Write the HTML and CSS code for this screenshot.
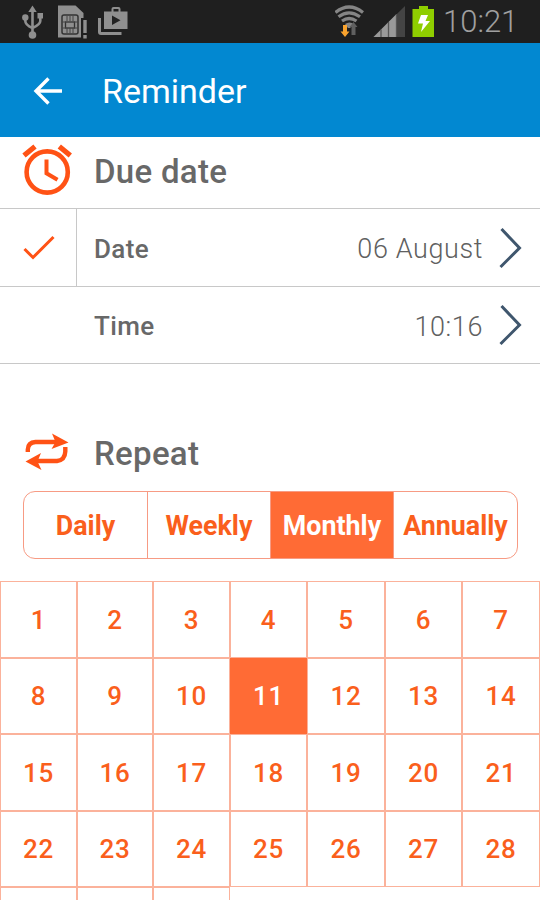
FILE: index.html
```
<!DOCTYPE html>
<html lang="en">
<head>
    <meta charset="utf-8">
    <title>Reminder</title>
    <link rel="stylesheet" href="styles.css">
</head>
<body>
    <div class="status-bar">
        <svg class="status-icons" width="130" height="42" viewBox="0 0 130 42" fill="#8f8f8f">
            <!-- usb -->
            <path d="M32.500 5.500l4.200 6.500h-8.400z"/>
            <circle cx="32.500" cy="35" r="3.800"/>
            <circle cx="25.300" cy="17.500" r="3.200"/>
            <rect x="37.500" y="13" width="5.500" height="5.500"/>
            <path d="M32.500 11v22M25.300 18v3q0 4 7.200 7M40.300 17v4q0 3.500-7.800 7" fill="none" stroke="#8f8f8f" stroke-width="2.600"/>
            <!-- sim card -->
            <path d="M58 5.500h17.500l8 7.500v5h-2.500v19.500H58z"/>
            <rect x="62" y="15" width="16" height="19" rx="2" fill="none" stroke="#333" stroke-width="1.500"/>
            <rect x="65.500" y="22" width="9" height="6" fill="none" stroke="#333" stroke-width="1.300"/>
            <path d="M67 16v5M70 16v5M73 16v5M67 28v5M70 28v5M73 28v5M62 22h4M74 22h4M62 28h4M74 28h4" stroke="#444"/>
            <path d="M83.300 20h3.400v13h-3.400zM83.300 35h3.400v3.500h-3.400z"/>
            <!-- store bag -->
            <path d="M104 11.500h7.500V9q0-2 2-2h5q2 0 2 2v2.500h7V29H104zM113.500 11.500h5V9h-5z" fill-rule="evenodd"/>
            <path d="M112 15.500l8.500 4.800-8.500 4.700z" fill="#222"/>
            <path d="M98 18h3v14h20.500v3H101q-3 0-3-3z"/>
        </svg>
        <svg class="status-icons" width="105" height="42" viewBox="335 0 105 42">
            <!-- wifi with traffic arrows -->
            <g fill="none" stroke="#858585" stroke-width="3.200">
                <path d="M335.500 12.500q13.500-11 27.500 0M338.500 16.800q10.500-8 21.500 0M342 21q7-5 14.500 0"/>
            </g>
            <path d="M345 24q4.500-3 9 0L350 28h-2z" fill="#858585"/>
            <path d="M353.500 22l4 5h-2v8h-4v-8h-2z" fill="#606060"/>
            <path d="M343 25h4v6.500h2.500L345 37l-4.500-5.500h2.500z" fill="#f9a32e"/>
            <!-- signal -->
            <path d="M373.500 37L405 6v31z" fill="#444"/>
            <path d="M373.500 37L396 14.500V37z" fill="#999"/>
            <path d="M381 29.500v7.500M388.500 22v15M396.500 14v23" stroke="#555" stroke-width="1.300"/>
            <!-- battery -->
            <path d="M419 6h9v3h6v28h-21.500V9h6.500z" fill="#8fce00"/>
            <path d="M421 15h7l-2.500 6H430l-9 11 2-8.500h-5z" fill="#fff"/>
        </svg>
        <span class="clock">10:21</span>
    </div>

    <div class="app-bar">
        <svg width="30" height="28" viewBox="0 0 30 28" fill="none" stroke="#fff" stroke-width="3.400">
            <path d="M15.500 1.500L3 14l12.500 12.500M3 14h26"/>
        </svg>
        <h1>Reminder</h1>
    </div>

    <div class="section-title due">
        <svg width="50" height="52" viewBox="0 0 50 52" fill="none" stroke="#ff5215">
            <circle cx="25.200" cy="28" r="20.600" stroke-width="4.600"/>
            <path d="M24.500 15.500v13.800L35.500 35.700" stroke-width="4"/>
            <path d="M2 11.500L13 2.500M37.300 2.500l11 9" stroke-width="5.200"/>
        </svg>
        <h2>Due date</h2>
    </div>

    <div class="row">
        <div class="check">
            <svg width="32" height="26" viewBox="0 0 32 26" fill="none" stroke="#ff5215" stroke-width="3">
                <path d="M1.500 14L10 22.500 30.500 2"/>
            </svg>
        </div>
        <span class="label">Date</span>
        <span class="value">06 August</span>
        <svg class="chevron" width="24" height="42" viewBox="0 0 24 42" fill="none" stroke="#3f566d" stroke-width="3">
            <path d="M2.500 2l18 19L1.500 40"/>
        </svg>
    </div>
    <div class="row">
        <div class="check empty"></div>
        <span class="label">Time</span>
        <span class="value">10:16</span>
        <svg class="chevron" width="24" height="42" viewBox="0 0 24 42" fill="none" stroke="#3f566d" stroke-width="3">
            <path d="M2.500 2l18 19L1.500 40"/>
        </svg>
    </div>

    <div class="section-title repeat">
        <svg width="50" height="38" viewBox="0 0 50 38" fill="#ff5215">
            <path d="M5.800 19v-2.500Q6 9.500 13.500 9H36M43.300 14v4.500Q43 27 35 28H13" fill="none" stroke="#ff5215" stroke-width="4.400"/>
            <path d="M30 .5L46.500 9.500 29.500 16l4-7zM19 20L3.500 28.500 19.500 37l-4-8.500z"/>
        </svg>
        <h2>Repeat</h2>
    </div>

    <div class="tabs">
        <div class="tab">Daily</div>
        <div class="tab">Weekly</div>
        <div class="tab active">Monthly</div>
        <div class="tab">Annually</div>
    </div>

    <div class="days">
        <div class="day">1</div>
        <div class="day">2</div>
        <div class="day">3</div>
        <div class="day">4</div>
        <div class="day">5</div>
        <div class="day">6</div>
        <div class="day">7</div>
        <div class="day">8</div>
        <div class="day">9</div>
        <div class="day">10</div>
        <div class="day active">11</div>
        <div class="day">12</div>
        <div class="day">13</div>
        <div class="day">14</div>
        <div class="day">15</div>
        <div class="day">16</div>
        <div class="day">17</div>
        <div class="day">18</div>
        <div class="day">19</div>
        <div class="day">20</div>
        <div class="day">21</div>
        <div class="day">22</div>
        <div class="day">23</div>
        <div class="day">24</div>
        <div class="day">25</div>
        <div class="day">26</div>
        <div class="day">27</div>
        <div class="day">28</div>
        <div class="day cut"></div>
        <div class="day cut"></div>
        <div class="day cut"></div>
    </div>
</body>
</html>
```
FILE: styles.css
```
* {
    box-sizing: border-box;
}

body {
    margin: 0;
    height: 900px;
    overflow: hidden;
    background-color: #fff;
    color: #686868;
    font-family: Roboto, sans-serif;
}

svg {
    display: block;
    flex-shrink: 0;
}

.status-bar {
    display: flex;
    justify-content: space-between;
    height: 43px;
    background-color: #1f1f1f;
}

.status-icons + .status-icons {
    margin-left: auto;
}

.clock {
    width: 100px;
    padding-left: 3px;
    color: #a0a0a0;
    font-size: 31px;
    font-weight: 300;
    line-height: 43px;
}

.app-bar {
    display: flex;
    align-items: center;
    height: 94px;
    padding: 2px 0 0 33px;
    background-color: #0288d1;
}

.app-bar h1 {
    margin: 0 0 0 39px;
    color: #fff;
    font-size: 34px;
    font-weight: 400;
}

.section-title {
    display: flex;
    align-items: center;
    padding-left: 22px;
}

.section-title h2 {
    margin: 0 0 0 22px;
    font-size: 33px;
    font-weight: 500;
    letter-spacing: 0.3px;
}

.due {
    height: 72px;
    padding-bottom: 6px;
    border-bottom: 1px solid #c8c8c8;
}

.due h2 {
    padding-top: 4px;
}

.row {
    display: flex;
    align-items: center;
    height: 78px;
    border-bottom: 1px solid #c8c8c8;
}

.row + .row {
    height: 77px;
}

.check {
    display: flex;
    align-items: center;
    width: 77px;
    height: 100%;
    padding-left: 23px;
    border-right: 1px solid #c8c8c8;
}

.check.empty {
    border-color: transparent;
}

.label {
    margin-left: 17px;
    padding-top: 2px;
    font-size: 26px;
    font-weight: 500;
    letter-spacing: 0.4px;
}

.value {
    margin-left: auto;
    padding-top: 3px;
    color: #606060;
    font-size: 27px;
    font-weight: 300;
    letter-spacing: 0.6px;
}

.chevron {
    margin: 0 17px 0 16px;
}

.repeat {
    height: 78px;
    margin-top: 50px;
}

.repeat svg {
    margin-bottom: 2px;
}

.tabs {
    display: grid;
    grid-template-columns: 124px 123px 123px 123px;
    width: 495px;
    height: 68px;
    margin: -1px 0 0 23px;
    border: 1px solid #f79b84;
    border-radius: 12px;
    overflow: hidden;
}

.tab {
    display: flex;
    align-items: center;
    justify-content: center;
    padding-top: 1px;
    border-right: 1px solid #f79b84;
    color: #fa5f1c;
    font-size: 26.8px;
    font-weight: 700;
}

.tab:last-child {
    border-right: none;
}

.tab.active {
    background-color: #ff6b35;
    color: #fff;
}

.days {
    display: grid;
    grid-template-columns: 77px 76px 77px 77px 78px 77px 78px;
    grid-template-rows: 77px 76px 77px 76px 13px;
    margin-top: 22px;
}

.day {
    display: flex;
    align-items: center;
    justify-content: center;
    border: 1px solid #fbb29b;
    color: #fa5f1c;
    font-size: 26px;
    font-weight: 500;
    letter-spacing: 0.6px;
}

.day.active {
    background-color: #ff6b35;
    border-color: #ff6b35;
    color: #fff;
}

/* last row continues below the screen */
.day.cut {
    border-bottom: none;
}
```
